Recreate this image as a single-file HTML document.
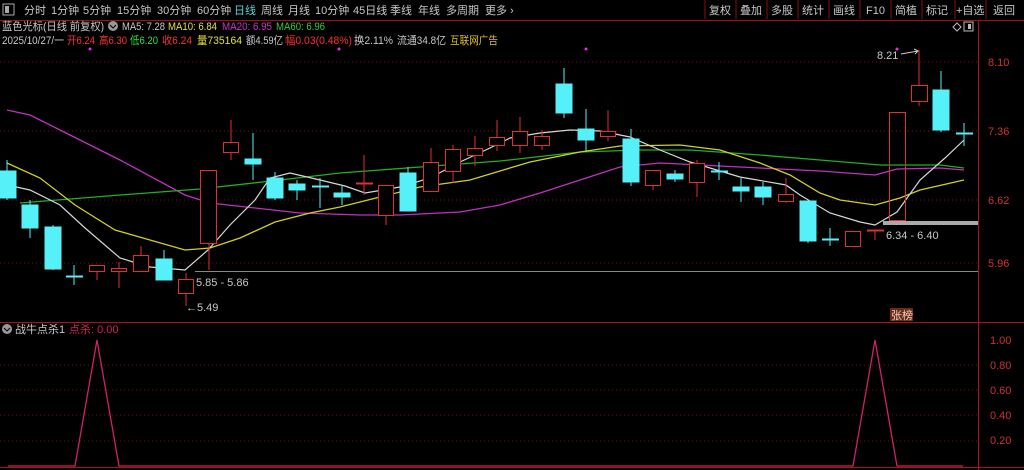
<!DOCTYPE html>
<html><head><meta charset="utf-8"><style>
body{margin:0;background:#000;width:1024px;height:470px;overflow:hidden;font-family:"Liberation Sans","Noto Sans CJK SC",sans-serif;}
svg{position:absolute;left:0;top:0}
text{font-family:"Liberation Sans","Noto Sans CJK SC",sans-serif;font-size:11px}
</style></head><body>
<svg width="1024" height="470" viewBox="0 0 1024 470">
<rect x="0" y="0" width="1024" height="20" fill="#000"/>
<rect x="3" y="4" width="11" height="11" fill="none" stroke="#aaa"/><rect x="5" y="6" width="4" height="7" fill="#aaa"/>
<g fill="#c8c8c8" font-size="11">
<text x="24" y="14">分时</text><text x="51" y="14">1分钟</text><text x="83" y="14">5分钟</text><text x="117" y="14">15分钟</text><text x="157" y="14">30分钟</text><text x="197" y="14">60分钟</text>
<text x="234" y="14" fill="#5fd3d8">日线</text><text x="261" y="14">周线</text><text x="288" y="14">月线</text><text x="315" y="14">10分钟</text><text x="353" y="14">45日线</text><text x="390" y="14">季线</text><text x="418" y="14">年线</text><text x="446" y="14">多周期</text><text x="485" y="14">更多 ›</text>
</g>
<g stroke="#8a1010"><line x1="705" y1="0" x2="705" y2="19"/><line x1="736" y1="0" x2="736" y2="19"/><line x1="767" y1="0" x2="767" y2="19"/><line x1="798" y1="0" x2="798" y2="19"/><line x1="829" y1="0" x2="829" y2="19"/><line x1="860" y1="0" x2="860" y2="19"/><line x1="891" y1="0" x2="891" y2="19"/><line x1="922" y1="0" x2="922" y2="19"/><line x1="955" y1="0" x2="955" y2="19"/><line x1="986" y1="0" x2="986" y2="19"/></g>
<g fill="#c8c8c8"><text x="709" y="14">复权</text><text x="740" y="14">叠加</text><text x="771" y="14">多股</text><text x="802" y="14">统计</text><text x="833" y="14">画线</text><text x="866" y="14">F10</text><text x="895" y="14">简植</text><text x="926" y="14">标记</text><text x="956" y="14">+自选</text><text x="993" y="14">返回</text></g>
<line x1="0" y1="20.5" x2="1024" y2="20.5" stroke="#a01010"/>
<text x="2" y="30" fill="#c8c8c8" textLength="102" lengthAdjust="spacingAndGlyphs">蓝色光标(日线 前复权)</text>
<circle cx="113" cy="26" r="5" fill="#999"/><path d="M110 25l3 3 3-3" stroke="#000" fill="none"/>
<text x="122" y="30" fill="#c8c8c8" textLength="43" lengthAdjust="spacingAndGlyphs">MA5: 7.28</text><text x="168" y="30" fill="#e0e040" textLength="49" lengthAdjust="spacingAndGlyphs">MA10: 6.84</text><text x="222" y="30" fill="#d030d0" textLength="50" lengthAdjust="spacingAndGlyphs">MA20: 6.95</text><text x="276" y="30" fill="#30d030" textLength="49" lengthAdjust="spacingAndGlyphs">MA60: 6.96</text>
<g font-size="10.5">
<text x="2" y="44" fill="#c8c8c8" textLength="62" lengthAdjust="spacingAndGlyphs">2025/10/27/一</text><text x="67" y="44" fill="#ff3030" textLength="28" lengthAdjust="spacingAndGlyphs">开6.24</text><text x="99" y="44" fill="#ff3030" textLength="28" lengthAdjust="spacingAndGlyphs">高6.30</text><text x="130" y="44" fill="#30e030" textLength="28" lengthAdjust="spacingAndGlyphs">低6.20</text><text x="162" y="44" fill="#ff3030" textLength="30" lengthAdjust="spacingAndGlyphs">收6.24</text><text x="197" y="44" fill="#e0e040" textLength="45" lengthAdjust="spacingAndGlyphs">量735164</text><text x="246" y="44" fill="#c8c8c8" textLength="37" lengthAdjust="spacingAndGlyphs">额4.59亿</text><text x="285" y="44" fill="#ff3030" textLength="67" lengthAdjust="spacingAndGlyphs">幅0.03(0.48%)</text><text x="354" y="44" fill="#c8c8c8" textLength="39" lengthAdjust="spacingAndGlyphs">换2.11%</text><text x="397" y="44" fill="#c8c8c8" textLength="49" lengthAdjust="spacingAndGlyphs">流通34.8亿</text><text x="450" y="44" fill="#e0c030" textLength="48" lengthAdjust="spacingAndGlyphs">互联网广告</text>
</g>
<circle cx="90" cy="49" r="1.5" fill="#e030e0"/><circle cx="339" cy="49" r="1.5" fill="#e030e0"/><circle cx="586" cy="49" r="1.5" fill="#e030e0"/>
<path d="M953 27l4-4 4 4-4 4z" fill="none" stroke="#bbb"/><rect x="964" y="22" width="9" height="9" fill="none" stroke="#bbb"/><rect x="968" y="24" width="3" height="5" fill="#bbb"/>
<line x1="978.5" y1="21" x2="978.5" y2="470" stroke="#b01010"/>
<line x1="0" y1="322.5" x2="1024" y2="322.5" stroke="#b01010"/>
<line x1="0" y1="467.5" x2="1024" y2="467.5" stroke="#b01010"/>
<g stroke="#701010" stroke-dasharray="1,3"><line x1="0" y1="62" x2="978" y2="62"/><line x1="0" y1="131" x2="978" y2="131"/><line x1="0" y1="200" x2="978" y2="200"/><line x1="0" y1="263" x2="978" y2="263"/>
<line x1="0" y1="365" x2="978" y2="365"/><line x1="0" y1="390" x2="978" y2="390"/><line x1="0" y1="415" x2="978" y2="415"/><line x1="0" y1="441" x2="978" y2="441"/></g>
<g fill="#d03030" font-size="11"><text x="988" y="66">8.10</text><text x="988" y="135">7.36</text><text x="988" y="204">6.62</text><text x="988" y="267">5.96</text>
<text x="990" y="344">1.00</text><text x="990" y="369">0.80</text><text x="990" y="394">0.60</text><text x="990" y="419">0.40</text><text x="990" y="444">0.20</text></g>
<line x1="195" y1="271.5" x2="978" y2="271.5" stroke="#888"/>
<rect x="883" y="221" width="95" height="4" fill="#aaa"/>
<polyline fill="none" stroke="#c030c0" stroke-width="1.3" points="7,110 30,115 60,130 120,160 185,195 210,203 300,213 360,215 400,215 460,212 500,205 540,193 580,180 620,167 660,163 700,165 760,168 820,171 875,175 897,169 940,168 964,170"/>
<polyline fill="none" stroke="#20b020" stroke-width="1.3" points="20,203 120,195 200,189 280,180 340,173 420,167 500,161 580,152 640,150 690,150 760,155 820,160 880,165 940,165 964,168"/>
<polyline fill="none" stroke="#d0d020" stroke-width="1.3" points="7,163 40,178 75,205 115,230 150,240 185,250 210,248 240,238 275,222 310,213 340,207 380,197 420,187 470,180 530,162 580,152 620,146 680,145 720,150 760,163 790,175 820,193 840,200 875,205 900,198 920,190 964,180"/>
<polyline fill="none" stroke="#d8d8d8" stroke-width="1.2" points="7,185 30,190 60,205 85,228 120,258 150,267 185,270 208,250 230,225 255,200 270,178 290,173 320,180 345,186 365,193 400,187 430,178 460,162 490,148 510,138 540,133 570,130 600,131 630,137 660,150 690,162 740,177 786,185 800,195 830,213 860,222 875,225 897,212 920,180 945,158 964,140"/>
<g fill="#55f0f8" stroke="#55f0f8">
<line x1="7" y1="160" x2="7" y2="200"/><rect x="-1" y="171" width="17" height="27"/>
<line x1="30" y1="200" x2="30" y2="238"/><rect x="22" y="205" width="16" height="23"/>
<line x1="53" y1="225" x2="53" y2="270"/><rect x="45" y="227" width="16" height="42"/>
<line x1="74" y1="265" x2="74" y2="285"/><line x1="66" y1="276.5" x2="83" y2="276.5" stroke-width="2"/>
<line x1="164" y1="250" x2="164" y2="280"/><rect x="156" y="259" width="16" height="21"/>
<line x1="253" y1="133" x2="253" y2="180"/><rect x="245" y="159" width="16" height="5"/>
<line x1="275" y1="172" x2="275" y2="200"/><rect x="267" y="178" width="16" height="20"/>
<line x1="297" y1="180" x2="297" y2="200"/><rect x="289" y="184" width="16" height="6"/>
<line x1="320" y1="178" x2="320" y2="208"/><line x1="312" y1="186.5" x2="329" y2="186.5" stroke-width="2"/>
<line x1="342" y1="185" x2="342" y2="205"/><rect x="334" y="193" width="16" height="4"/>
<line x1="408" y1="167" x2="408" y2="211"/><rect x="400" y="173" width="16" height="38"/>
<line x1="564" y1="68" x2="564" y2="118"/><rect x="556" y="84" width="16" height="29"/>
<line x1="586" y1="109" x2="586" y2="152"/><rect x="578" y="129" width="16" height="11"/>
<line x1="631" y1="129" x2="631" y2="186"/><rect x="623" y="139" width="16" height="43"/>
<line x1="675" y1="170" x2="675" y2="182"/><rect x="667" y="174" width="16" height="5"/>
<line x1="719" y1="162" x2="719" y2="180"/><line x1="711" y1="171.5" x2="728" y2="171.5" stroke-width="2"/>
<line x1="741" y1="178" x2="741" y2="202"/><rect x="733" y="187" width="16" height="4"/>
<line x1="763" y1="182" x2="763" y2="205"/><rect x="755" y="187" width="16" height="10"/>
<line x1="808" y1="201" x2="808" y2="243"/><rect x="800" y="201" width="16" height="40"/>
<line x1="830" y1="228" x2="830" y2="246"/><line x1="822" y1="239.5" x2="839" y2="239.5" stroke-width="2"/>
<line x1="941" y1="71" x2="941" y2="132"/><rect x="933" y="90" width="16" height="40"/>
<line x1="964" y1="123" x2="964" y2="146"/><line x1="956" y1="133.5" x2="973" y2="133.5" stroke-width="2"/>
</g>
<g fill="none" stroke="#e03030">
<line x1="97" y1="271" x2="97" y2="280"/><rect x="89.5" y="265.5" width="15" height="6" fill="#000"/>
<line x1="119" y1="262" x2="119" y2="288"/><rect x="111.5" y="268.5" width="15" height="3" fill="#000"/>
<line x1="141" y1="246" x2="141" y2="255"/><rect x="133.5" y="255.5" width="15" height="16" fill="#000"/>
<line x1="186" y1="273" x2="186" y2="306"/><rect x="178.5" y="279.5" width="15" height="14" fill="#000"/>
<line x1="209" y1="243" x2="209" y2="270"/><rect x="200.5" y="170.5" width="16" height="73" fill="#000"/>
<line x1="231" y1="120" x2="231" y2="160"/><rect x="223.5" y="142.5" width="15" height="10" fill="#000"/>
<line x1="364" y1="155" x2="364" y2="195"/><line x1="356" y1="183.5" x2="373" y2="183.5" stroke-width="2"/>
<line x1="386" y1="185" x2="386" y2="225"/><rect x="378.5" y="185.5" width="15" height="30" fill="#000"/>
<line x1="431" y1="148" x2="431" y2="192"/><rect x="423.5" y="162.5" width="15" height="29" fill="#000"/>
<line x1="453" y1="145" x2="453" y2="183"/><rect x="445.5" y="149.5" width="15" height="22" fill="#000"/>
<line x1="475" y1="136" x2="475" y2="166"/><rect x="467.5" y="148.5" width="15" height="7" fill="#000"/>
<line x1="497" y1="120" x2="497" y2="151"/><rect x="489.5" y="137.5" width="15" height="8" fill="#000"/>
<line x1="520" y1="117" x2="520" y2="153"/><rect x="512.5" y="131.5" width="15" height="14" fill="#000"/>
<line x1="542" y1="130" x2="542" y2="150"/><rect x="534.5" y="136.5" width="15" height="9" fill="#000"/>
<line x1="608" y1="110" x2="608" y2="141"/><rect x="600.5" y="131.5" width="15" height="5" fill="#000"/>
<line x1="653" y1="170" x2="653" y2="190"/><rect x="645.5" y="170.5" width="15" height="15" fill="#000"/>
<line x1="697" y1="160" x2="697" y2="197"/><rect x="689.5" y="163.5" width="15" height="19" fill="#000"/>
<line x1="786" y1="178" x2="786" y2="203"/><rect x="778.5" y="194.5" width="15" height="7" fill="#000"/>
<rect x="845.5" y="231.5" width="15" height="15" fill="#000"/>
<line x1="875" y1="230" x2="875" y2="240"/><line x1="867" y1="230.5" x2="884" y2="230.5" stroke-width="2"/>
<rect x="889.5" y="112.5" width="16" height="108"/>
<line x1="919" y1="50" x2="919" y2="85"/><line x1="919" y1="101" x2="919" y2="106"/><rect x="911.5" y="85.5" width="16" height="16" fill="#000"/>
</g>
<g fill="#c8c8c8"><text x="196" y="286">5.85 - 5.86</text><text x="186" y="311">←5.49</text><text x="886" y="239">6.34 - 6.40</text><text x="877" y="59">8.21</text></g>
<path d="M901 54l17-3m-4-2l4 2-3 3" stroke="#ccc" fill="none"/>
<circle cx="897" cy="49" r="1.5" fill="#e030e0"/>
<rect x="890" y="308" width="23" height="13" fill="#6a2a1a"/><text x="891" y="319" fill="#f0d0c0">张榜</text>
<circle cx="7" cy="329" r="5" fill="#999"/><path d="M4 328l3 3 3-3" stroke="#000" fill="none"/>
<text x="15" y="333" fill="#c8c8c8">战牛点杀1</text><text x="69" y="333" fill="#d02060">点杀: 0.00</text>
<polyline fill="none" stroke="#d0206a" stroke-width="1.3" points="8,466 75,466 97,340 119,466 853,466 875,340 897,466 963,466"/>
</svg>
</body></html>
